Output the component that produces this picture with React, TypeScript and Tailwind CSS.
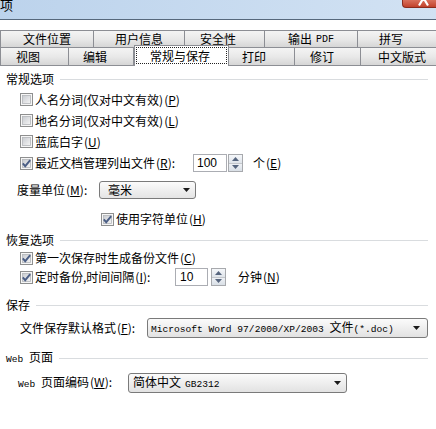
import type { ReactNode } from "react";

const mono = "font-['Liberation_Mono','Noto_Sans_CJK_SC',monospace]";

function Key({ k }: { k: string }) {
  return (
    <span className="ml-[1px]">
      (<span className="underline underline-offset-1">{k}</span>)
    </span>
  );
}

function Check({ on }: { on?: boolean }) {
  return (
    <svg width="13" height="13" viewBox="0 0 13 13" className="shrink-0">
      <defs>
        <linearGradient id="cbfill" x1="0" y1="0" x2="1" y2="1">
          <stop offset="0" stopColor="#c8cbd0" />
          <stop offset="1" stopColor="#f5f5f5" />
        </linearGradient>
      </defs>
      <rect x="0.5" y="0.5" width="12" height="12" fill="#f6f6f6" stroke="#8e8f8f" />
      <rect x="2.5" y="2.5" width="8" height="8" fill="url(#cbfill)" stroke="#b4b6ba" strokeWidth="0.8" />
      {on && <path d="M2.8 6.4 L5.2 9.2 L10.2 3.2" fill="none" stroke="#4b5e85" strokeWidth="1.9" />}
    </svg>
  );
}

function Spin() {
  return (
    <div className="flex h-[18px] w-[15px] shrink-0 flex-col border border-[#a7a9ad] bg-white">
      <div className="flex flex-1 items-center justify-center border-b border-[#c4c7cc] bg-gradient-to-b from-[#f5f7fa] to-[#dfe4ea]">
        <svg width="7" height="4" viewBox="0 0 7 4">
          <path d="M0 4 L3.5 0 L7 4Z" fill="#56657e" />
        </svg>
      </div>
      <div className="flex flex-1 items-center justify-center bg-gradient-to-b from-[#eef1f5] to-[#d9dfe6]">
        <svg width="7" height="4" viewBox="0 0 7 4">
          <path d="M0 0 L3.5 4 L7 0Z" fill="#56657e" />
        </svg>
      </div>
    </div>
  );
}

function Arrow() {
  return (
    <svg width="7" height="4" viewBox="0 0 7 4" className="shrink-0">
      <path d="M0 0 L7 0 L3.5 4Z" fill="#1a1a1a" />
    </svg>
  );
}

function Heading({ children }: { children: ReactNode }) {
  return (
    <div className="flex h-[16px] items-center gap-[6px] pl-[6px] pr-[8px]">
      <span className="leading-none">{children}</span>
      <div className="h-px flex-1 bg-[#d9dcdf]" />
    </div>
  );
}

function Tab({ className, children }: { className: string; children: ReactNode }) {
  return (
    <div
      className={
        "flex shrink-0 items-center border border-[#8c8e94] bg-gradient-to-b from-[#f4f4f4] via-[#e9e9e9] to-[#d6d6d6] " +
        className
      }
    >
      {children}
    </div>
  );
}

export default function App() {
  return (
    <div className="h-[429px] w-[436px] overflow-hidden bg-white text-[12px] text-black font-['Noto_Sans_CJK_SC',sans-serif]">
      {/* title bar */}
      <div className="flex h-[20px] items-start border-b border-[#56687c] bg-gradient-to-r from-[#bcd3ec] to-[#d2e2f3]">
        <span className="-ml-[13px] mt-[-2px] text-[13px] leading-[14px]">选项</span>
        <div className="ml-auto h-[8px] w-[34px] overflow-hidden rounded-bl-[4px] border-b border-l border-[#8a2b1d] bg-gradient-to-b from-[#d9705c] to-[#c2412b]">
          <svg width="34" height="8" viewBox="0 0 34 8">
            <path d="M20.5 -2 L16 5.5 M20.5 -2 L25 5.5" stroke="#ffffff" strokeWidth="2.2" />
          </svg>
        </div>
      </div>

      <div className="h-[10px] bg-white" />

      {/* tabs row 1 */}
      <div className="flex h-[17px]">
        <Tab className="w-[94px] border-b-0 pl-[22px]">文件位置</Tab>
        <Tab className="-ml-px w-[92px] border-b-0 pl-[21px]">用户信息</Tab>
        <Tab className="-ml-px w-[81px] border-b-0 pl-[15px]">安全性</Tab>
        <Tab className="-ml-px w-[94px] border-b-0 pl-[23px]">
          输出<span className={mono + " ml-[4px] text-[10px]"}>PDF</span>
        </Tab>
        <Tab className="-ml-px w-[80px] border-b-0 pl-[21px]">拼写</Tab>
      </div>

      {/* tabs row 2 */}
      <div className="flex h-[18px] items-end">
        <Tab className="h-[18px] w-[69px] border-b-0 pl-[15px]">视图</Tab>
        <Tab className="-ml-px h-[18px] w-[66px] border-b-0 pl-[14px]">编辑</Tab>
        <div className="relative z-10 -mb-px h-[21px] w-[95px] shrink-0 border border-b-0 border-[#8c8e94] bg-white p-[1px]">
          <div className="flex h-[17px] items-center border border-dotted border-[#222] pl-[13px]">常规与保存</div>
        </div>
        <Tab className="h-[18px] w-[66px] border-b-0 border-l-0 pl-[13px]">打印</Tab>
        <Tab className="-ml-px h-[18px] w-[67px] border-b-0 pl-[15px]">修订</Tab>
        <Tab className="-ml-px h-[18px] w-[78px] border-b-0 pl-[17px]">中文版式</Tab>
      </div>

      {/* page */}
      <div className="border-t border-[#8c8e94] bg-white">
        <div className="mt-[5px]">
          <Heading>常规选项</Heading>
        </div>

        <div className="mt-[2px] flex h-[21px] items-center gap-[2px] pl-[20px]">
          <Check />
          <span>
            人名分词(仅对中文有效)
            <Key k="P" />
          </span>
        </div>
        <div className="flex h-[21px] items-center gap-[2px] pl-[20px]">
          <Check />
          <span>
            地名分词(仅对中文有效)
            <Key k="L" />
          </span>
        </div>
        <div className="flex h-[21px] items-center gap-[2px] pl-[20px]">
          <Check />
          <span>
            蓝底白字
            <Key k="U" />
          </span>
        </div>
        <div className="flex h-[22px] items-center pl-[20px]">
          <Check on />
          <span className="ml-[2px] w-[158px]">
            最近文档管理列出文件
            <Key k="R" />:
          </span>
          <div className="flex h-[18px] w-[34px] items-center border border-[#abadb3] pl-[3px] font-['Liberation_Sans',sans-serif]">
            100
          </div>
          <div className="ml-px">
            <Spin />
          </div>
          <span className="ml-[10px]">
            个<Key k="E" />
          </span>
        </div>

        <div className="mt-[6px] flex h-[19px] items-center pl-[17px]">
          <span className="w-[82px]">
            度量单位
            <Key k="M" />:
          </span>
          <div className="flex h-[18px] w-[97px] items-center rounded-[3px] border border-[#7a7a7a] bg-gradient-to-b from-[#fbfbfb] to-[#e4e4e4] pl-[8px] pr-[5px]">
            <span className="flex-1">毫米</span>
            <Arrow />
          </div>
        </div>

        <div className="mt-[10px] flex h-[20px] items-center gap-[2px] pl-[101px]">
          <Check on />
          <span>
            使用字符单位
            <Key k="H" />
          </span>
        </div>

        <div className="mt-[3px]">
          <Heading>恢复选项</Heading>
        </div>

        <div className="flex h-[20px] items-center gap-[2px] pl-[20px]">
          <Check on />
          <span>
            第一次保存时生成备份文件
            <Key k="C" />
          </span>
        </div>
        <div className="flex h-[18px] items-center pl-[20px]">
          <Check on />
          <span className="ml-[2px] w-[140px]">
            定时备份,时间间隔
            <Key k="I" />:
          </span>
          <div className="flex h-[18px] w-[33px] items-center border border-[#abadb3] pl-[4px] font-['Liberation_Sans',sans-serif]">
            10
          </div>
          <div className="ml-[3px]">
            <Spin />
          </div>
          <span className="ml-[12px]">
            分钟
            <Key k="N" />
          </span>
        </div>

        <div className="mt-[11px]">
          <Heading>保存</Heading>
        </div>

        <div className="mt-[5px] flex h-[20px] items-center pl-[20px]">
          <span className="w-[127px]">
            文件保存默认格式
            <Key k="F" />:
          </span>
          <div className="flex h-[20px] w-[281px] items-center rounded-[3px] border border-[#7a7a7a] bg-gradient-to-b from-[#fbfbfb] to-[#e2e2e2] pl-[3px] pr-[7px]">
            <span className="flex-1 whitespace-nowrap">
              <span className={mono + " text-[9.6px]"}>Microsoft Word 97/2000/XP/2003 </span>
              文件
              <span className={mono + " text-[9.6px]"}>(*.doc)</span>
            </span>
            <Arrow />
          </div>
        </div>

        <div className="mt-[12px]">
          <Heading>
            <span className={mono + " text-[9.6px]"}>Web </span>页面
          </Heading>
        </div>

        <div className="mt-[7px] flex h-[20px] items-center pl-[18px]">
          <span className="w-[110px]">
            <span className={mono + " text-[9.6px]"}>Web </span>页面编码
            <Key k="W" />:
          </span>
          <div className="flex h-[20px] w-[219px] items-center rounded-[3px] border border-[#7a7a7a] bg-gradient-to-b from-[#fbfbfb] to-[#e2e2e2] pl-[4px] pr-[5px]">
            <span className="flex-1 whitespace-nowrap">
              简体中文<span className={mono + " ml-[4px] text-[9.6px]"}>GB2312</span>
            </span>
            <Arrow />
          </div>
        </div>
      </div>
    </div>
  );
}
